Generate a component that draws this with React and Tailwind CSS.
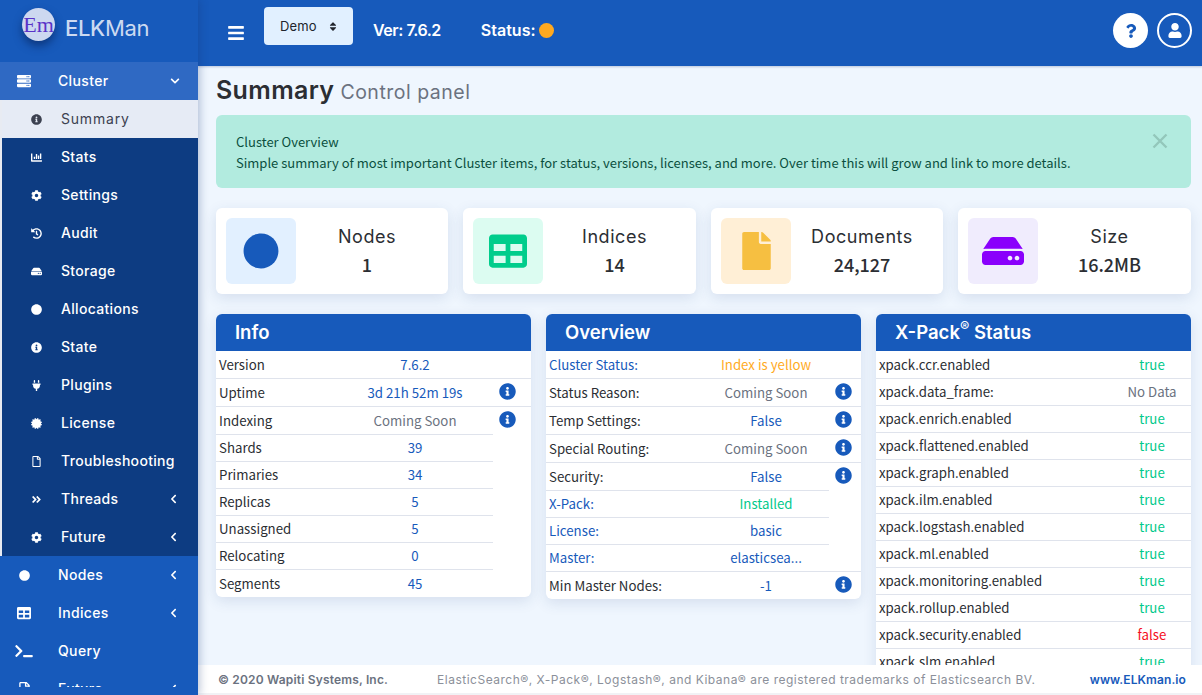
import React from "react";
import {
  FaServer, FaInfoCircle, FaChartBar, FaCog, FaHistory, FaHdd, FaCircle, FaPlug, FaCertificate,
  FaRegFile, FaAngleDoubleRight, FaTable, FaFile, FaQuestion, FaUser, FaBars, FaChevronDown, FaChevronLeft, FaSort, FaTerminal,
} from "react-icons/fa";

const head = "font-['Inter','Liberation_Sans',sans-serif]";
const body = "font-['Noto_Sans_CJK_JP','Noto_Sans',sans-serif]";

const subItems = [
  { label: "Summary", icon: FaInfoCircle, active: true },
  { label: "Stats", icon: FaChartBar },
  { label: "Settings", icon: FaCog },
  { label: "Audit", icon: FaHistory },
  { label: "Storage", icon: FaHdd },
  { label: "Allocations", icon: FaCircle },
  { label: "State", icon: FaInfoCircle },
  { label: "Plugins", icon: FaPlug },
  { label: "License", icon: FaCertificate },
  { label: "Troubleshooting", icon: FaRegFile },
  { label: "Threads", icon: FaAngleDoubleRight, caret: true },
  { label: "Future", icon: FaCog, caret: true },
];

function Sidebar() {
  return (
    <aside className={`w-[198px] shrink-0 h-[695px] bg-[#175abb] flex flex-col overflow-hidden relative z-20 shadow-[2px_0_8px_rgba(20,50,110,0.28)] ${head}`}>
      <div className="h-[62px] shrink-0 flex items-start pl-[22px] pt-[8px]">
        <div className="w-[33px] h-[33px] rounded-full bg-[#cdd8f0] flex items-center justify-center shadow-[0_5px_8px_rgba(5,30,80,0.55)]">
          <span className="font-['Liberation_Serif',serif] text-[22px] leading-none text-[#5a33c8]">Em</span>
        </div>
        <div className="ml-[10px] mt-[6px] text-[22px] leading-[28px] text-[#ccdaf1] tracking-[-0.3px]"><span className="font-medium">ELK</span><span className="font-normal">Man</span></div>
      </div>
      <div className="h-[38px] shrink-0 bg-[#2f69c3] flex items-center text-white">
        <FaServer className="ml-[17px] w-[14px] h-[14px]" />
        <span className="ml-[27px] pb-[1px] text-[14px] font-medium tracking-[0.35px] flex-1">Cluster</span>
        <FaChevronDown className="mr-[18px] w-[10px] h-[10px]" />
      </div>
      <div className="shrink-0 pl-[2px] bg-[#e8ebf2]">
        {subItems.map((it) =>
          <div key={it.label + it.caret} className={`h-[38px] flex items-center ${it.active ? "bg-[#e6ebf5] text-[#3c4150]" : "bg-[#0d3c82] text-white"}`}>
            <span className="w-[59px] flex justify-center pl-[10px] shrink-0"><it.icon className="w-[11px] h-[11px]" /></span>
            <span className={`text-[14px] pb-[1px] flex-1 ${it.active ? "font-normal tracking-[0.8px]" : "font-medium tracking-[0.32px]"}`}>{it.label}</span>
            {it.caret && <FaChevronLeft className="mr-[20px] w-[9px] h-[10px]" />}
          </div>
        )}
      </div>
      <div className="h-[131px] shrink-0 overflow-hidden text-white">
        {[
          ["Nodes", FaCircle, true, "w-[11px] h-[11px] ml-[19px] mr-[28px]"],
          ["Indices", FaTable, true, "w-[14px] h-[14px] ml-[17px] mr-[27px]"],
          ["Query", FaTerminal, false, "w-[18px] h-[14px] ml-[15px] mr-[25px]"],
          ["Future", FaRegFile, true, "w-[11px] h-[14px] ml-[19px] mr-[28px]"],
        ].map(([label, Icon, caret, cls]) =>
          <div key={label} className="h-[38px] flex items-center">
            <Icon className={`shrink-0 ${cls}`} />
            <span className="text-[14px] pb-[1px] font-medium tracking-[0.35px] flex-1">{label}</span>
            {caret && <FaChevronLeft className="mr-[20px] w-[9px] h-[10px]" />}
          </div>
        )}
      </div>
      <div className="flex-1 bg-[#175abb]"></div>
    </aside>
  );
}

function Header() {
  return (
    <header className="h-[66px] shrink-0 bg-[#175abb] flex items-center relative z-10 shadow-[0_1px_2px_rgba(30,60,120,0.25)]">
      <FaBars className="ml-[29px] text-white w-[18px] h-[18px]" />
      <div className="ml-[19px] mb-[14px] w-[89px] h-[38px] rounded bg-[#e1f0ff] flex items-center justify-between pl-[16px] pr-[15px] text-[#20242c]">
        <span className={`text-[13px] mt-[2px] ${head} tracking-[0.1px]`}>Demo</span>
        <FaSort className="w-[10px] h-[11px]" />
      </div>
      <div className={`ml-[20px] mb-[6px] text-white text-[16px] font-semibold tracking-[-0.45px] ${head}`}>Ver: 7.6.2</div>
      <div className={`ml-[40px] mb-[6px] text-white text-[16px] font-semibold ${head} flex items-center`}>
        Status:<span className="ml-[3px] w-[15px] h-[15px] rounded-full bg-[#ffa91f] inline-block"></span>
      </div>
      <div className="ml-auto mr-[10px] mb-[5px] flex gap-[9px]">
        <div className="w-[35px] h-[35px] rounded-full bg-white flex items-center justify-center"><FaQuestion className="text-[#175abb] w-[14px] h-[14px]" /></div>
        <div className="w-[35px] h-[35px] rounded-full border-2 border-white flex items-center justify-center"><FaUser className="text-white w-[14px] h-[15px]" /></div>
      </div>
    </header>
  );
}

const stats = [
  { t: "Nodes", v: "1", box: "bg-[#e2f0ff]", el: <FaCircle className="w-[36px] h-[36px] text-[#175abb]" /> },
  { t: "Indices", v: "14", box: "bg-[#dcfcf1]", el: <FaTable className="w-[38px] h-[38px] text-[#01cd8c]" /> },
  { t: "Documents", v: "24,127", box: "bg-[#ffefd6]", el: <FaFile className="w-[29px] h-[38px] text-[#f6bf41]" /> },
  { t: "Size", v: "16.2MB", box: "bg-[#f0ecfd]", el: <FaHdd className="w-[42px] h-[38px] text-[#8a00fc]" /> },
];

function Stat({ s }) {
  return (
    <div className="h-[86px] bg-white rounded-md shadow-[0_4px_14px_rgba(40,70,130,0.13)] flex items-center p-[10px]">
      <div className={`w-[70px] h-[66px] rounded-md flex items-center justify-center shrink-0 ${s.box}`}>{s.el}</div>
      <div className="flex-1 text-center text-[#2b2e33] mb-[2px]">
        <div className={`text-[18px] leading-[28px] tracking-[0.55px] font-normal ${head}`}>{s.t}</div>
        <div className={`text-[18px] leading-[28px] -mt-[1px] font-medium ${body}`}>{s.v}</div>
      </div>
    </div>
  );
}

const Info = () => <FaInfoCircle className="w-[17px] h-[17px] text-[#175abb]" />;
const C = { blue: "text-[#175abb]", gray: "text-[#6b7280]", green: "text-[#02c98b]", yellow: "text-[#ffab1f]", red: "text-[#f50f1e]" };
const B = "border-b border-[#dfe3ec]";

function Row({ label, value, color = "blue", labelBlue, h = 27, icon, fullLine, noLine, labelW, iconW }) {
  return (
    <div className={`flex items-stretch text-[13.25px] ${h === 28 ? "h-[28px]" : "h-[27px]"}`}>
      <div className={`flex-1 flex items-center min-w-0 ${noLine ? "" : B}`}>
        <span className={`pl-[3px] shrink-0 ${labelW} ${labelBlue ? C.blue : "text-[#2b2e33]"}`}>{label}</span>
        <span className={`flex-1 text-center ${C[color]}`}>{value}</span>
      </div>
      {iconW && <div className={`${iconW} shrink-0 flex items-start pt-[4px] pl-[5.5px] ${fullLine ? B : ""}`}>{icon && <Info />}</div>}
    </div>
  );
}

function Card({ title, children }) {
  return (
    <div className={`bg-white rounded-md shadow-[0_4px_14px_rgba(40,70,130,0.13)] overflow-hidden ${body}`}>
      <div className={`h-[37px] pt-[1px] bg-[#175abb] text-white flex items-center pl-[19px] text-[18.5px] font-semibold ${head}`}>{title}</div>
      {children}
    </div>
  );
}

const infoRows = [
  ["Version", "7.6.2", "blue", 28, false, true],
  ["Uptime", "3d 21h 52m 19s", "blue", 28, true, true],
  ["Indexing", "Coming Soon", "gray", 28, true, false],
  ["Shards", "39", "blue", 27, false, false],
  ["Primaries", "34", "blue", 27, false, false],
  ["Replicas", "5", "blue", 27, false, false],
  ["Unassigned", "5", "blue", 27, false, false],
  ["Relocating", "0", "blue", 27, false, false],
  ["Segments", "45", "blue", 27, false, false, true],
];
const overRows = [
  ["Cluster Status:", "Index is yellow", "yellow", 28, false, true, true],
  ["Status Reason:", "Coming Soon", "gray", 28, true, true],
  ["Temp Settings:", "False", "blue", 28, true, true],
  ["Special Routing:", "Coming Soon", "gray", 28, true, true],
  ["Security:", "False", "blue", 28, true, false],
  ["X-Pack:", "Installed", "green", 27, false, false, true],
  ["License:", "basic", "blue", 27, false, false, true],
  ["Master:", "elasticsea...", "blue", 27, false, true, true],
  ["Min Master Nodes:", "-1", "blue", 27, true, false, false, true],
];
const xp = [
  ["xpack.ccr.enabled", "true", "green"],
  ["xpack.data_frame:", "No Data", "gray"],
  ["xpack.enrich.enabled", "true", "green"],
  ["xpack.flattened.enabled", "true", "green"],
  ["xpack.graph.enabled", "true", "green"],
  ["xpack.ilm.enabled", "true", "green"],
  ["xpack.logstash.enabled", "true", "green"],
  ["xpack.ml.enabled", "true", "green"],
  ["xpack.monitoring.enabled", "true", "green"],
  ["xpack.rollup.enabled", "true", "green"],
  ["xpack.security.enabled", "false", "red"],
  ["xpack.slm.enabled", "true", "green"],
];

export default function App() {
  return (
    <div className={`w-full h-[695px] flex overflow-hidden bg-[#eff6fe] ${body}`}>
      <Sidebar />
      <div className="flex-1 min-w-0 flex flex-col h-[695px]">
        <Header />
        <main className="flex-1 min-h-0 overflow-hidden pl-[18px] pr-[11px] bg-[#eff6fe]">
          <div className={`h-[49px] pt-[1px] flex items-center text-[#2b2e33] ${head}`}>
            <span className="text-[25px] font-semibold tracking-[0.35px]">Summary</span>
            <span className="ml-[6px] mt-[3px] text-[19.5px] text-[#6b7280] tracking-[0.5px]">Control panel</span>
          </div>
          <div className="h-[73px] rounded-md bg-[#b2ebdf] text-[#0a4f3e] text-[13px] leading-[21px] pl-[20px] pt-[16px] relative">
            <div>Cluster Overview</div>
            <div>Simple summary of most important Cluster items, for status, versions, licenses, and more. Over time this will grow and link to more details.</div>
            <svg className="absolute right-[23px] top-[18px] w-[16px] h-[16px]" viewBox="0 0 16 16" fill="none" stroke="#93c7bb" strokeWidth="2.4"><path d="M1.5 1.5 14.5 14.5M14.5 1.5 1.5 14.5" /></svg>
          </div>
          <div className="grid grid-cols-[232px_233px_232px_233px] gap-[15px] mt-[20px]">
            {stats.map((s) => <Stat key={s.t} s={s} />)}
          </div>
          <div className="grid grid-cols-3 gap-[15px] mt-[20px] items-start">
            <Card title="Info">
              {infoRows.map(([l, v, c, h, ic, full, last]) =>
                <Row key={l} label={l} value={v} color={c} h={h} icon={ic} fullLine={full} noLine={last} labelW="w-[121px]" iconW="w-[38px]" />
              )}
            </Card>
            <Card title="Overview">
              {overRows.map(([l, v, c, h, ic, full, blue, last]) =>
                <Row key={l} label={l} value={v} color={c} h={h} icon={ic} fullLine={full} labelBlue={blue} noLine={last} labelW="w-[157px]" iconW="w-[32px]" />
              )}
            </Card>
            <Card title={<span>X-Pack<sup className="text-[14px] font-medium">®</sup> Status</span>}>
              {xp.map(([l, v, c], i) =>
                <Row key={l} label={l} value={v} color={c} h={i === 0 ? 28 : 27} labelW="w-[237px]" />
              )}
            </Card>
          </div>
        </main>
        <footer className={`h-[30px] shrink-0 pt-[1px] bg-white border-b-2 border-[#f1f2f5] flex items-center pl-[20px] pr-[16px] text-[12px] relative z-10 ${head}`}>
          <span className="font-semibold text-[#6b7280] tracking-[0.17px]">© 2020 Wapiti Systems, Inc.</span>
          <span className="ml-[49px] text-[#8b909a] tracking-[0.5px]">ElasticSearch®, X-Pack®, Logstash®, and Kibana® are registered trademarks of Elasticsearch BV.</span>
          <span className="ml-auto font-semibold text-[#175abb] tracking-[0.1px]">www.ELKman.io</span>
        </footer>
      </div>
    </div>
  );
}
